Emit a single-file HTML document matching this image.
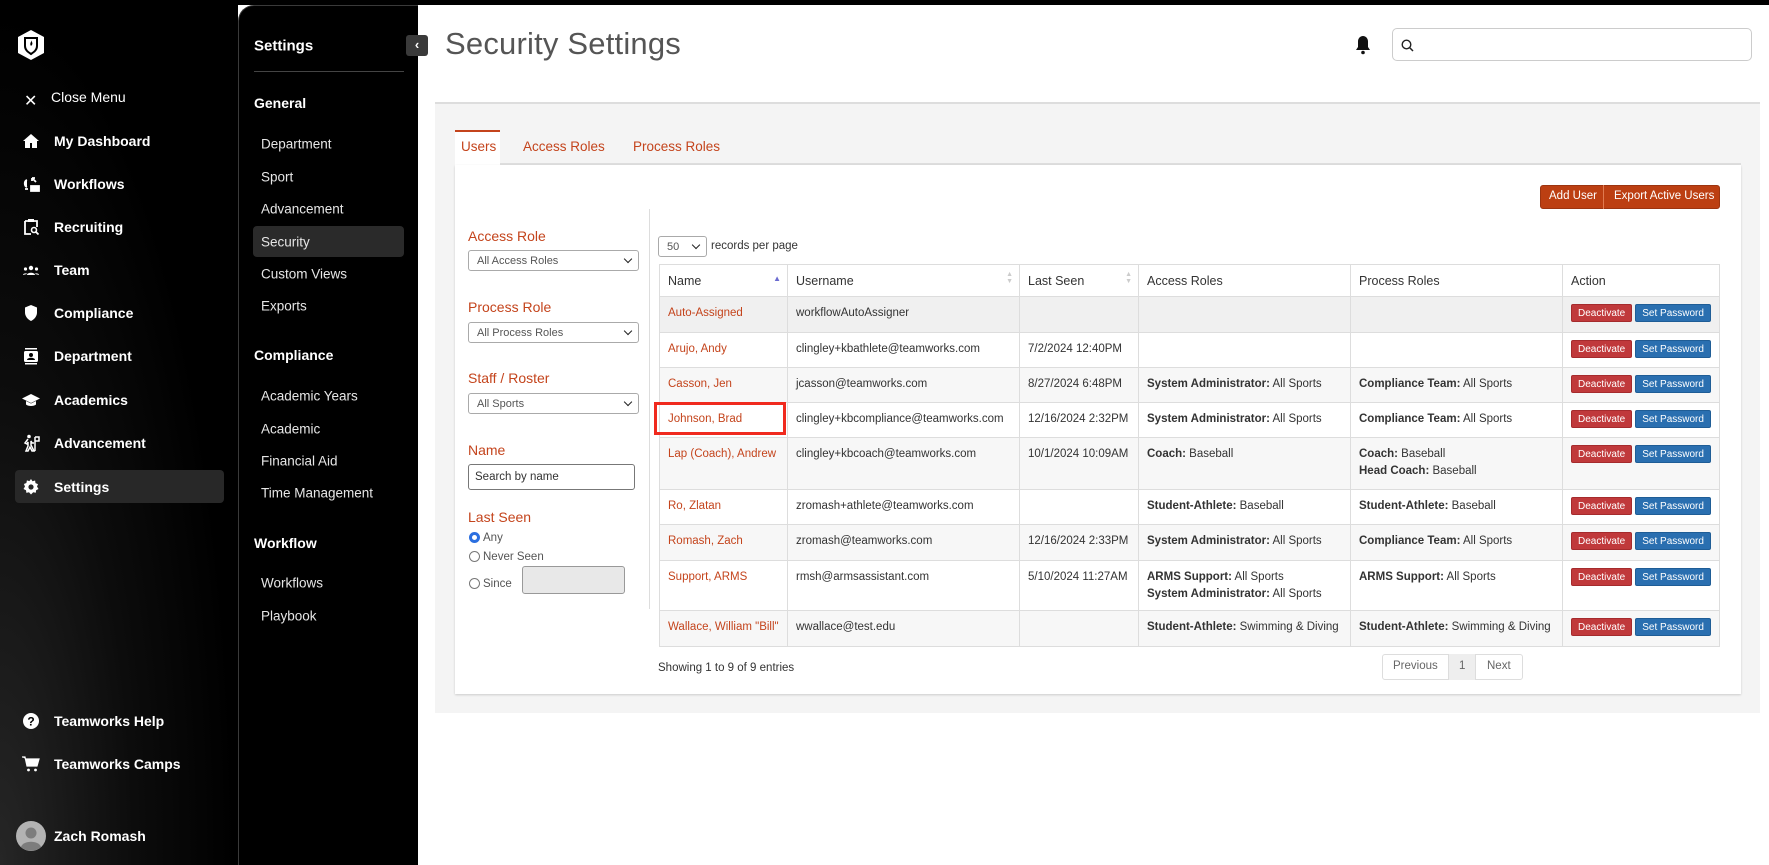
<!DOCTYPE html>
<html><head><meta charset="utf-8"><style>
*{box-sizing:border-box;margin:0;padding:0}
body{width:1769px;height:865px;position:relative;overflow:hidden;background:#fff;font-family:"Liberation Sans",sans-serif;}
.abs{position:absolute}
#side{left:0;top:0;width:238px;height:865px;background:radial-gradient(ellipse at 0% 100%,#262626 0%,#0c0c0c 40%,#000 70%);}
#topbar{left:0;top:0;width:1769px;height:5px;background:#000}
#sp{left:238px;top:5px;width:180px;height:860px;background:#000;border-left:1px solid #3a3a3a;border-top:1px solid #3a3a3a;border-top-left-radius:16px}
.nav{position:absolute;left:54px;color:#fff;font-size:14px;font-weight:bold;transform:translateY(-50%)}
.ic{position:absolute;left:22px;width:18px;height:18px;transform:translateY(-50%)}
.sh{position:absolute;left:254px;color:#fff;font-size:14px;font-weight:bold;transform:translateY(-50%)}
.si{position:absolute;left:261px;color:#e6e6e6;font-size:13.5px;transform:translateY(-50%)}
.lbl{position:absolute;left:468px;color:#c4441c;font-size:14px;transform:translateY(-50%)}
.sel{position:absolute;left:468px;width:171px;height:21px;border:1px solid #aaa;border-radius:3px;background:#fff;font-size:11px;color:#555;padding:4px 8px}
.sel:after{content:"";position:absolute;right:7px;top:5px;width:5px;height:5px;border-right:1.5px solid #222;border-bottom:1.5px solid #222;transform:rotate(45deg)}
.rad{position:absolute;left:469px;font-size:11.5px;color:#555;transform:translateY(-50%)}
.rad i{display:inline-block;width:11px;height:11px;border:1px solid #777;border-radius:50%;vertical-align:-2px;margin-right:3px}
table{position:absolute;left:659px;top:264px;width:1060px;border-collapse:collapse;font-size:11.5px;color:#333;table-layout:fixed}
td,th{border:1px solid #ddd;padding:9px 8px 0;vertical-align:top;text-align:left;line-height:14px}
th{font-weight:normal;font-size:12.5px;padding:0 8px;vertical-align:middle;height:32px;background:#fff;position:relative}
td.n{color:#c4441c}
td b{color:#333}
.bt{display:inline-block;height:18px;font-size:10px;color:#fff;line-height:18px;padding:0 6px;border-radius:2px;margin-top:-1px}
.d{background:#c0393b;border:1px solid #a52b2d}.p{background:#2a6fb0;border:1px solid #1f5d96;margin-left:3px}
td.a{padding-top:8px;white-space:nowrap}
</style></head><body>
<div id="side" class="abs"></div>
<div id="topbar" class="abs"></div>
<div id="sp" class="abs"></div>

<!-- logo -->
<svg class="abs" style="left:16px;top:29px" width="30" height="32" viewBox="0 0 30 32"><polygon points="15,1 28,8 28,24 15,31 2,24 2,8" fill="#fff"/><path d="M9 9h12v8c0 4-3 6-6 8-3-2-6-4-6-8z" fill="none" stroke="#000" stroke-width="2"/><path d="M15 11c1 2-2 3 0 6 1-1 2-2 1-4" fill="#000"/></svg>
<div class="abs" style="left:24px;top:91px;color:#fff;font-size:16px">✕</div>
<div class="abs" style="left:51px;top:89px;color:#fff;font-size:14px">Close Menu</div>

<svg class="ic" style="top:141px" viewBox="0 0 18 18"><path d="M9 2 1 9h2v7h5v-5h2v5h5V9h2z" fill="#fff"/></svg>
<div class="nav" style="top:141px">My Dashboard</div>
<svg class="ic" style="top:184px" viewBox="0 0 18 18"><path d="M5 5C2 6 2 11 5 12M3 14h3M10 3l4 4M10 3v3M10 3h3M9 11h8v5H9z" stroke="#fff" stroke-width="1.8" fill="#fff"/></svg>
<div class="nav" style="top:184px">Workflows</div>
<svg class="ic" style="top:227px" viewBox="0 0 18 18"><path d="M3 3h3M12 3h3v6M3 3v13h6" stroke="#fff" stroke-width="1.8" fill="none"/><rect x="6" y="1" width="6" height="3" fill="#fff"/><circle cx="12" cy="12" r="2.5" stroke="#fff" stroke-width="1.6" fill="none"/><path d="M14 14l2.5 2.5" stroke="#fff" stroke-width="1.8"/></svg>
<div class="nav" style="top:227px">Recruiting</div>
<svg class="ic" style="top:270px" viewBox="0 0 18 18"><circle cx="9" cy="7" r="2.2" fill="#fff"/><circle cx="3.5" cy="8" r="1.6" fill="#fff"/><circle cx="14.5" cy="8" r="1.6" fill="#fff"/><path d="M5 14c0-3 8-3 8 0zM1 14c0-2 4-2 4-1zM13 13c0-1 4-1 4 1z" fill="#fff"/></svg>
<div class="nav" style="top:270px">Team</div>
<svg class="ic" style="top:313px" viewBox="0 0 18 18"><path d="M9 1 3 3.5v5c0 4 3 7 6 8.5 3-1.5 6-4.5 6-8.5v-5z" fill="#fff"/></svg>
<div class="nav" style="top:313px">Compliance</div>
<svg class="ic" style="top:356px" viewBox="0 0 18 18"><rect x="3" y="1" width="12" height="1.5" fill="#fff"/><rect x="2" y="4" width="14" height="11" rx="1.5" fill="#fff"/><rect x="3" y="16" width="12" height="1.5" fill="#fff"/><circle cx="9" cy="8" r="2" fill="#000"/><path d="M5 13c0-3 8-3 8 0z" fill="#000"/></svg>
<div class="nav" style="top:356px">Department</div>
<svg class="ic" style="top:400px" viewBox="0 0 18 18"><path d="M9 3 0 7.5 9 12l9-4.5z" fill="#fff"/><path d="M4 10v3.5c2 2 8 2 10 0V10l-5 2.5z" fill="#fff"/></svg>
<div class="nav" style="top:400px">Academics</div>
<svg class="ic" style="top:443px" viewBox="0 0 18 18"><circle cx="7" cy="2.5" r="1.8" fill="#fff"/><path d="M6 5 3 9l2 1 1-2v4l-2 5h2l2-4 2 4h2l-3-6V7l1 2h2" stroke="#fff" stroke-width="1.5" fill="none"/><path d="M13 3h4v4h-4M13 3v14" stroke="#fff" stroke-width="1.5" fill="none"/></svg>
<div class="nav" style="top:443px">Advancement</div>
<div class="abs" style="left:15px;top:470px;width:209px;height:33px;background:#282828;border-radius:4px"></div>
<svg class="ic" style="top:487px" viewBox="0 0 18 18"><path d="M9 1l1.5 2.2 2.6-.7.4 2.6 2.5 1L15 8.5 16.5 11l-2.4 1.2-.3 2.6-2.6-.5L9 16.5l-2-2.2-2.6.6-.4-2.6L1.5 11 3 8.5 1.9 6l2.5-1 .5-2.6 2.5.7z" fill="#fff"/><circle cx="9" cy="9" r="2.6" fill="#282828"/></svg>
<div class="nav" style="top:487px">Settings</div>

<svg class="ic" style="top:721px" viewBox="0 0 18 18"><circle cx="9" cy="9" r="8" fill="#fff"/><text x="9" y="13.5" font-size="12" font-weight="bold" text-anchor="middle" fill="#000" font-family="Liberation Sans">?</text></svg>
<div class="nav" style="top:721px">Teamworks Help</div>
<svg class="ic" style="top:764px" viewBox="0 0 18 18"><path d="M0 2h3l2 9h10l2-7H4" fill="#fff" stroke="#fff" stroke-width="1.2"/><circle cx="6.5" cy="15" r="1.4" fill="#fff"/><circle cx="13.5" cy="15" r="1.4" fill="#fff"/></svg>
<div class="nav" style="top:764px">Teamworks Camps</div>
<svg class="abs" style="left:16px;top:821px" width="30" height="30" viewBox="0 0 30 30"><circle cx="15" cy="15" r="15" fill="#b3b3b3"/><circle cx="15" cy="12" r="5.5" fill="#7d7d7d"/><path d="M5 26c2-7 18-7 20 0-5 5-15 5-20 0z" fill="#7d7d7d"/></svg>
<div class="nav" style="top:836px">Zach Romash</div>

<!-- settings panel -->
<div class="sh" style="top:46px;font-size:15px">Settings</div>
<div class="abs" style="left:254px;top:71px;width:150px;height:1px;background:#444"></div>
<div class="sh" style="top:103px">General</div>
<div class="si" style="top:144px">Department</div>
<div class="si" style="top:177px">Sport</div>
<div class="si" style="top:209px">Advancement</div>
<div class="abs" style="left:253px;top:226px;width:151px;height:31px;background:#2a2a2a;border-radius:4px"></div>
<div class="si" style="top:242px">Security</div>
<div class="si" style="top:274px">Custom Views</div>
<div class="si" style="top:306px">Exports</div>
<div class="sh" style="top:355px">Compliance</div>
<div class="si" style="top:396px">Academic Years</div>
<div class="si" style="top:429px">Academic</div>
<div class="si" style="top:461px">Financial Aid</div>
<div class="si" style="top:493px">Time Management</div>
<div class="sh" style="top:543px">Workflow</div>
<div class="si" style="top:583px">Workflows</div>
<div class="si" style="top:616px">Playbook</div>
<div class="abs" style="left:406px;top:35px;width:22px;height:21px;background:#3a3a3a;border-radius:3px;color:#fff;font-size:13px;font-weight:bold;text-align:center;line-height:20px">‹</div>

<!-- header -->
<div class="abs" style="left:445px;top:26px;font-size:31px;color:#555;font-weight:300;letter-spacing:0.2px">Security Settings</div>
<svg class="abs" style="left:1355px;top:35px" width="16" height="20" viewBox="0 0 16 20"><path d="M8 1c-3 0-5 2.5-5 5.5V12l-2 3h14l-2-3V6.5C13 3.5 11 1 8 1z" fill="#111"/><circle cx="8" cy="17.5" r="1.8" fill="#111"/></svg>
<div class="abs" style="left:1392px;top:28px;width:360px;height:33px;border:1px solid #ccc;border-radius:5px"></div>
<svg class="abs" style="left:1401px;top:39px" width="13" height="13" viewBox="0 0 13 13"><circle cx="5.5" cy="5.5" r="4.3" stroke="#222" stroke-width="1.4" fill="none"/><path d="M8.5 8.5 12 12" stroke="#222" stroke-width="1.5"/></svg>

<!-- gray box -->
<div class="abs" style="left:435px;top:102px;width:1325px;height:611px;background:#f4f4f4;border-top:2px solid #ddd"></div>
<div class="abs" style="left:455px;top:163px;width:1286px;height:2px;background:#ddd"></div>
<div class="abs" style="left:455px;top:130px;width:45px;height:35px;background:#fff;border-top:2px solid #c4441c"></div>
<div class="abs" style="left:461px;top:139px;font-size:13.5px;color:#c4441c">Users</div>
<div class="abs" style="left:523px;top:139px;font-size:13.5px;color:#c4441c">Access Roles</div>
<div class="abs" style="left:633px;top:139px;font-size:13.5px;color:#c4441c">Process Roles</div>
<div class="abs" style="left:455px;top:165px;width:1286px;height:529px;background:#fff;box-shadow:0 1px 2px #ccc"></div>

<div class="abs" style="left:1540px;top:185px;width:180px;height:24px;background:#bc3f12;border:1px solid #9c3410;border-radius:3px"></div>
<div class="abs" style="left:1603px;top:185px;width:1px;height:24px;background:#e07a50"></div>
<div class="abs" style="left:1549px;top:190px;font-size:11.5px;color:#fff">Add User</div>
<div class="abs" style="left:1614px;top:190px;font-size:11.5px;color:#fff">Export Active Users</div>

<!-- filters -->
<div class="lbl" style="top:236px">Access Role</div>
<div class="sel" style="top:250px">All Access Roles</div>
<div class="lbl" style="top:307px">Process Role</div>
<div class="sel" style="top:322px">All Process Roles</div>
<div class="lbl" style="top:378px">Staff / Roster</div>
<div class="sel" style="top:393px">All Sports</div>
<div class="lbl" style="top:450px">Name</div>
<div class="abs" style="left:468px;top:464px;width:167px;height:26px;border:1px solid #777;border-radius:3px;font-size:11.5px;color:#333;padding:6px 6px">Search by name</div>
<div class="lbl" style="top:517px">Last Seen</div>
<div class="rad" style="top:538px"><i style="border:3px solid #2b6fe0;background:#fff"></i>Any</div>
<div class="rad" style="top:557px"><i></i>Never Seen</div>
<div class="rad" style="top:584px"><i></i>Since</div>
<div class="abs" style="left:522px;top:566px;width:103px;height:28px;border:1px solid #999;border-radius:3px;background:#e8e8e8"></div>
<div class="abs" style="left:649px;top:209px;width:1px;height:400px;background:#ddd"></div>

<div class="sel" style="left:658px;top:236px;width:49px;height:21px">50</div>
<div class="abs" style="left:711px;top:240px;font-size:11.5px;color:#333">records per page</div>

<table>
<colgroup><col style="width:128px"><col style="width:232px"><col style="width:119px"><col style="width:212px"><col style="width:212px"><col style="width:157px"></colgroup>
<tr><th>Name<span style="position:absolute;right:6px;top:7px;color:#6b6bd0;font-size:8px">▲</span></th><th>Username<span style="position:absolute;right:6px;top:6px;color:#ccc;font-size:7px;line-height:7px">▲<br>▼</span></th><th>Last Seen<span style="position:absolute;right:6px;top:6px;color:#ccc;font-size:7px;line-height:7px">▲<br>▼</span></th><th>Access Roles</th><th>Process Roles</th><th>Action</th></tr>
<tr style="height:36px;background:#f0f0f0"><td class="n">Auto-Assigned</td><td>workflowAutoAssigner</td><td></td><td></td><td></td><td class="a"><span class="bt d">Deactivate</span><span class="bt p">Set Password</span></td></tr>
<tr style="height:35px"><td class="n">Arujo, Andy</td><td>clingley+kbathlete@teamworks.com</td><td>7/2/2024 12:40PM</td><td></td><td></td><td class="a"><span class="bt d">Deactivate</span><span class="bt p">Set Password</span></td></tr>
<tr style="height:35px;background:#f7f7f7"><td class="n">Casson, Jen</td><td>jcasson@teamworks.com</td><td>8/27/2024 6:48PM</td><td><b>System Administrator:</b> All Sports</td><td><b>Compliance Team:</b> All Sports</td><td class="a"><span class="bt d">Deactivate</span><span class="bt p">Set Password</span></td></tr>
<tr style="height:35px"><td class="n">Johnson, Brad</td><td>clingley+kbcompliance@teamworks.com</td><td>12/16/2024 2:32PM</td><td><b>System Administrator:</b> All Sports</td><td><b>Compliance Team:</b> All Sports</td><td class="a"><span class="bt d">Deactivate</span><span class="bt p">Set Password</span></td></tr>
<tr style="height:52px;background:#f7f7f7"><td class="n">Lap (Coach), Andrew</td><td>clingley+kbcoach@teamworks.com</td><td>10/1/2024 10:09AM</td><td><b>Coach:</b> Baseball</td><td><b>Coach:</b> Baseball<br><span style="line-height:20px"><b>Head Coach:</b> Baseball</span></td><td class="a"><span class="bt d">Deactivate</span><span class="bt p">Set Password</span></td></tr>
<tr style="height:35px"><td class="n">Ro, Zlatan</td><td>zromash+athlete@teamworks.com</td><td></td><td><b>Student-Athlete:</b> Baseball</td><td><b>Student-Athlete:</b> Baseball</td><td class="a"><span class="bt d">Deactivate</span><span class="bt p">Set Password</span></td></tr>
<tr style="height:36px;background:#f7f7f7"><td class="n">Romash, Zach</td><td>zromash@teamworks.com</td><td>12/16/2024 2:33PM</td><td><b>System Administrator:</b> All Sports</td><td><b>Compliance Team:</b> All Sports</td><td class="a"><span class="bt d">Deactivate</span><span class="bt p">Set Password</span></td></tr>
<tr style="height:50px"><td class="n">Support, ARMS</td><td>rmsh@armsassistant.com</td><td>5/10/2024 11:27AM</td><td><b>ARMS Support:</b> All Sports<br><span style="line-height:20px"><b>System Administrator:</b> All Sports</span></td><td><b>ARMS Support:</b> All Sports</td><td class="a"><span class="bt d">Deactivate</span><span class="bt p">Set Password</span></td></tr>
<tr style="height:36px;background:#f7f7f7"><td class="n">Wallace, William "Bill"</td><td>wwallace@test.edu</td><td></td><td><b>Student-Athlete:</b> Swimming &amp; Diving</td><td><b>Student-Athlete:</b> Swimming &amp; Diving</td><td class="a"><span class="bt d">Deactivate</span><span class="bt p">Set Password</span></td></tr>
</table>
<div class="abs" style="left:654px;top:402px;width:132px;height:33px;border:3px solid #f02a1e"></div>

<div class="abs" style="left:658px;top:662px;font-size:11.5px;color:#333">Showing 1 to 9 of 9 entries</div>
<div class="abs" style="left:1382px;top:654px;width:141px;height:26px;border:1px solid #ddd;border-radius:3px;background:#fff"></div>
<div class="abs" style="left:1448px;top:654px;width:28px;height:26px;background:#eee;border-left:1px solid #ddd;border-right:1px solid #ddd"></div>
<div class="abs" style="left:1393px;top:660px;font-size:11.5px;color:#666">Previous</div>
<div class="abs" style="left:1459px;top:660px;font-size:11.5px;color:#666">1</div>
<div class="abs" style="left:1487px;top:660px;font-size:11.5px;color:#666">Next</div>
</body></html>
